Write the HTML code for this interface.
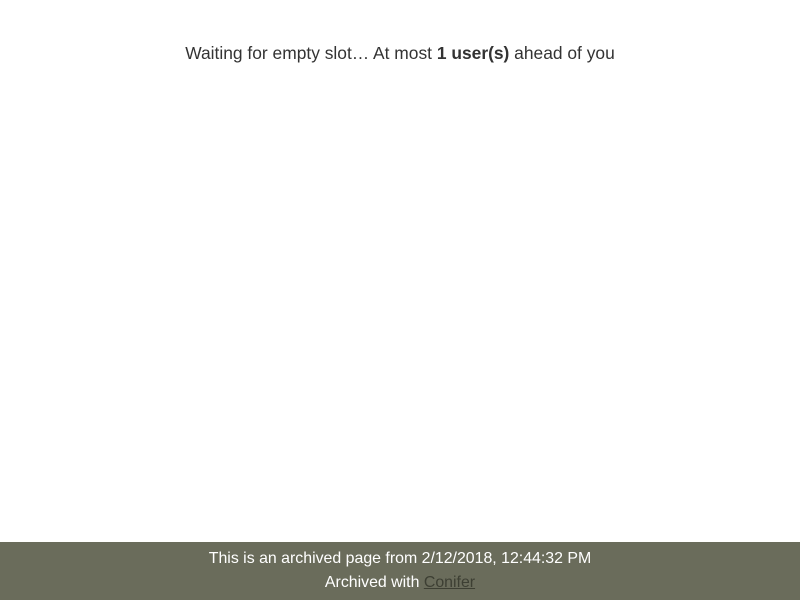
<!DOCTYPE html>
<html><head><style>
html,body{margin:0;padding:0;width:800px;height:600px;background:#fff;overflow:hidden;font-family:"Liberation Sans",sans-serif;}
.msg{position:absolute;top:43px;left:0;width:800px;text-align:center;font-size:17.4px;color:#333;}
.bar{position:absolute;left:0;top:542px;width:800px;height:58px;background:#6a6c5b;color:#fff;text-align:center;font-size:15.9px;}
.l1{position:absolute;top:8px;width:800px;}
.l2{position:absolute;top:32px;width:800px;}
.bar a{color:#3d3f33;text-decoration:underline;}
</style></head><body>
<div class="msg">Waiting for empty slot… At most <b>1 user(s)</b> ahead of you</div>
<div class="bar"><div class="l1">This is an archived page from 2/12/2018, 12:44:32 PM</div><div class="l2">Archived with <a>Conifer</a></div></div>
</body></html>
